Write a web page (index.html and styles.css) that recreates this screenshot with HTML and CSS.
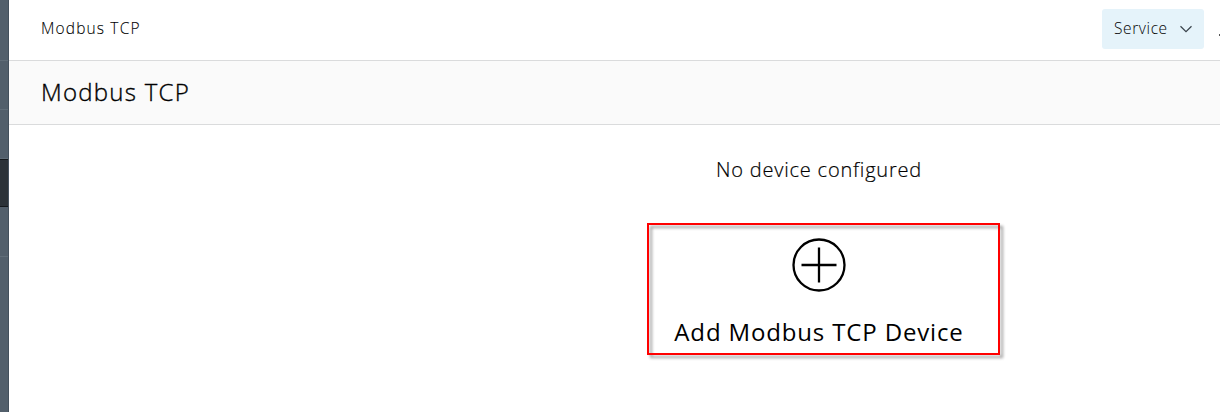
FILE: index.html
```html
<!DOCTYPE html>
<html lang="en">
<head>
<meta charset="utf-8">
<title>Modbus TCP</title>
<link rel="stylesheet" href="styles.css">
</head>
<body>
<div class="app">
  <nav class="sidebar">
    <div class="nav-item nav-first"></div>
    <div class="nav-item"></div>
    <div class="nav-item"></div>
    <div class="nav-item active"></div>
    <div class="nav-item nav-after"></div>
    <div class="nav-rest"></div>
  </nav>
  <div class="page">
    <header class="topbar">
      <span class="crumb">Modbus TCP</span>
      <button class="service"><span class="service-label">Service</span>
        <svg class="chevron" width="14" height="8" viewBox="0 0 14 8"><path d="M1.500 1.200 7 6.600l5.500-5.400" fill="none" stroke="#39424a" stroke-width="1.200"/></svg>
      </button>
      <span class="edge-mark"></span>
    </header>
    <div class="titlebar"><h1 class="title">Modbus TCP</h1></div>
    <main class="content">
      <p class="empty">No device configured</p>
      <div class="add">
        <svg class="plus" width="54" height="54" viewBox="0 0 54 54"><g fill="none" stroke="#000" stroke-width="2.300"><circle cx="27" cy="27" r="25.500"/><path d="M27 9.500v35M9.500 27h35"/></g></svg>
        <span class="add-label">Add Modbus TCP Device</span>
        <div class="highlight"></div>
      </div>
    </main>
  </div>
</div>
</body>
</html>
```
FILE: styles.css
```css
* { box-sizing: border-box; }
body { margin: 0; background: #fff; color: #000; font-family: "Open Sans", "Noto Sans", sans-serif; font-weight: 300; overflow: hidden; }
.app { display: flex; height: 412px; }
.sidebar { display: flex; flex-direction: column; width: 9px; flex: none; background: #525f6b; border-right: 1px solid #43505c; }
.nav-item { height: 49px; border-bottom: 1px solid #606d78; }
.nav-first { height: 61px; }
.nav-item.active { height: 48px; background: #2b3238; border-top: 1px solid #14181c; border-bottom-color: #14181c; }
.nav-item.nav-after { height: 50px; }
.page { flex: 1; min-width: 0; overflow: hidden; }
.topbar { display: flex; align-items: center; height: 61px; padding: 0 0 2px 32px; border-bottom: 1px solid #dadbdc; }
.crumb { margin-top: -2px; font-size: 15.5px; letter-spacing: 1.150px; white-space: nowrap; -webkit-text-stroke: .1px; }
.service { display: flex; align-items: center; justify-content: space-between; width: 102px; height: 40px; margin-left: auto; padding: 0 11px 0 12px; border: 0; border-radius: 3px; background: #e5f3fa; color: #000; font: inherit; font-size: 15.5px; letter-spacing: .6px; }
.service-label { margin-top: -2px; }
.edge-mark { width: 1px; height: 2px; margin: 12px 0 0 15px; background: #555; }
.titlebar { display: flex; align-items: center; height: 64px; padding: 0 0 2px 32px; background: #fafafa; border-bottom: 1px solid #dadbdc; }
.title { margin: 0; font-size: 24px; font-weight: 300; letter-spacing: 1.250px; line-height: 32px; -webkit-text-stroke: .35px; }
.content { display: flex; flex-direction: column; align-items: center; width: 1620px; padding-top: 31px; }
.empty { margin: 0; font-size: 20px; line-height: 28px; letter-spacing: .8px; -webkit-text-stroke: .2px; }
.add { position: relative; display: flex; flex-direction: column; align-items: center; margin-top: 54px; }
.plus { display: block; }
.add-label { margin-top: 24px; font-size: 24px; font-weight: 400; line-height: 32px; letter-spacing: .850px; white-space: nowrap; }
.highlight { position: absolute; left: calc(50% - 172px); top: -15px; width: 353px; height: 132px; border: 2px solid #f00; filter: drop-shadow(3px 3px 1.500px rgba(0, 0, 0, .4)); }
```
